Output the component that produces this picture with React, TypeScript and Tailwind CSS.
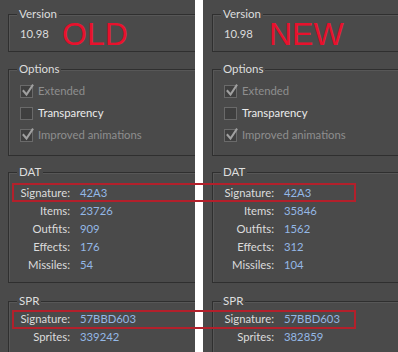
import React from "react";

const font = { fontFamily: '"Lato", "Noto Sans", sans-serif' };

function Check({ checked, disabled }: { checked?: boolean; disabled?: boolean }) {
  return (
    <span className="relative inline-flex h-[13px] w-[13px] shrink-0 items-center justify-center border border-[#6a6a6a] bg-[#3f3f3f]">
      {checked && (
        <svg width="13" height="13" viewBox="0 0 13 13" className="absolute left-[0px] top-[-2px]">
          <path d="M2.5 7 L5.5 10.5 L11.5 1.5" fill="none" stroke={disabled ? "#a0a0a0" : "#e0e0e0"} strokeWidth="2" strokeLinecap="square" />
        </svg>
      )}
    </span>
  );
}

function Group({ title, className, children }: { title: string; className: string; children?: React.ReactNode }) {
  return (
    <div className={`relative ml-[8px] mr-[-40px] border border-[#2f2f2f] shadow-[inset_1px_1px_0_#575757] ${className}`}>
      <span className="absolute left-[8px] top-[-9px] bg-[#4a4a4a] px-[2px] text-[11.5px] leading-[16px] text-[#dedede]">
        {title}
      </span>
      {children}
    </div>
  );
}

function Row({ label, value }: { label: string; value: string }) {
  return (
    <div className="flex h-[18px] items-center text-[11.3px]">
      <span className="w-[61px] text-right text-[#dcdcdc]">{label}</span>
      <span className="ml-[10px] text-[#94b8e6]">{value}</span>
    </div>
  );
}

function Panel({ tag, dat, spr, extra }: { tag: string; dat: string[]; spr: string[]; extra?: string }) {
  return (
    <div className={`relative h-[352px] w-[195px] shrink-0 overflow-hidden bg-[#4a4a4a] ${extra ?? ""}`} style={font}>
      <div className="flex flex-col pt-[14px]">
        <Group title="Version" className="h-[38px]">
          <div className="flex items-center pl-[11px] pt-[11px] text-[11.3px] leading-[16px] text-[#dcdcdc]">
            <span>10.98</span>
          </div>
        </Group>
        <Group title="Options" className="mt-[17px] h-[87px]">
          <div className="flex flex-col pl-[11px] pt-[10px] text-[11.3px]">
            <div className="flex h-[22px] items-center gap-[5px] text-[#8e8e8e]">
              <Check checked disabled />
              <span>Extended</span>
            </div>
            <div className="flex h-[22px] items-center gap-[5px] text-[#ececec]">
              <Check />
              <span>Transparency</span>
            </div>
            <div className="flex h-[22px] items-center gap-[5px] text-[#8e8e8e]">
              <Check checked disabled />
              <span>Improved animations</span>
            </div>
          </div>
        </Group>
        <Group title="DAT" className="mt-[16px] h-[111px]">
          <div className="flex flex-col pt-[11px]">
            <Row label="Signature:" value="42A3" />
            <Row label="Items:" value={dat[0]} />
            <Row label="Outfits:" value={dat[1]} />
            <Row label="Effects:" value={dat[2]} />
            <Row label="Missiles:" value={dat[3]} />
          </div>
        </Group>
        <Group title="SPR" className="mt-[18px] h-[80px]">
          <div className="flex flex-col pt-[8px]">
            <Row label="Signature:" value="57BBD603" />
            <Row label="Sprites:" value={spr[0]} />
          </div>
        </Group>
      </div>
      <span
        className="absolute top-[18px] text-[32px] leading-none text-[#e8112d]"
        style={{ fontFamily: '"Liberation Sans", Arial, sans-serif', left: tag === "OLD" ? 62 : 66 }}
      >
        {tag}
      </span>
    </div>
  );
}

export default function App() {
  return (
    <div className="relative flex h-[352px] w-[398px] gap-[8px] overflow-hidden bg-white">
      <Panel tag="OLD" dat={["23726", "909", "176", "54"]} spr={["339242"]} />
      <Panel tag="NEW" dat={["35846", "1562", "312", "104"]} spr={["382859"]} extra="pl-[1px]" />
      <div className="pointer-events-none absolute left-[12px] top-[183px] h-[19px] w-[344px] border-2 border-[#b3202b]" />
      <div className="pointer-events-none absolute left-[12px] top-[310px] h-[19px] w-[344px] border-2 border-[#b3202b]" />
    </div>
  );
}
